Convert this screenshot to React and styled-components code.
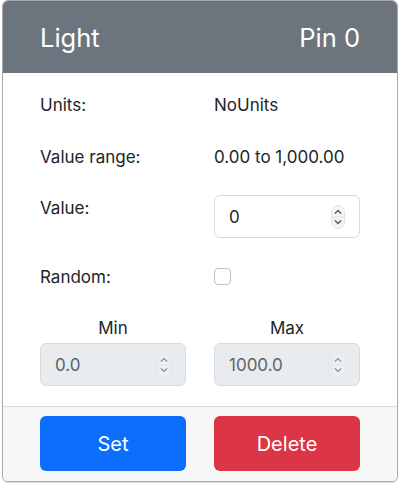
import React from 'react'
import styled, { createGlobalStyle } from 'styled-components'

const GlobalStyle = createGlobalStyle`
body {
  margin: 0;
  background: #fff;
  font-family: Inter, 'Liberation Sans', sans-serif;
  color: #212529;
}
`

const Page = styled.div`
padding: 0 2px 2px 2px;
`

const Card = styled.div`
border: 1px solid #a9a9a9;
border-radius: 6px;
overflow: hidden;
box-shadow: 0 1px 1px rgba(0,0,0,0.15);
`

const Header = styled.div`
height: 72px;
background: #6c757d;
color: #fff;
display: flex;
align-items: center;
justify-content: space-between;
padding: 0 37px;
font-size: 25.5px;
`

const Body = styled.div`
padding: 19px 37px 20px 37px;
display: flex;
flex-direction: column;
gap: 25.5px;
font-size: 17px;
line-height: 26px;
`

const Row = styled.div`
display: grid;
grid-template-columns: minmax(0, 1fr) minmax(0, 1fr);
column-gap: 28px;
align-items: start;
`

const Label = styled.div`
text-align: ${props => props.center ? 'center' : 'left'};
`

const Stack = styled.div`
display: flex;
flex-direction: column;
gap: 2px;
`

const InputBox = styled.div`
height: 43px;
box-sizing: border-box;
border: 1px solid #d7dbe0;
border-radius: 6px;
background: ${props => props.disabled ? '#e9ecef' : '#fff'};
display: flex;
align-items: center;
padding: 0 14px 0 14px;
`

const NumInput = styled.input`
flex: 1;
width: 0;
min-width: 0;
border: none;
outline: none;
background: transparent;
font: inherit;
font-size: 17px;
color: ${props => props.disabled ? '#5c636a' : '#212529'};
padding: 0;
appearance: textfield;
&::-webkit-inner-spin-button,
&::-webkit-outer-spin-button {
  -webkit-appearance: none;
  margin: 0;
}
`

const Check = styled.div`
width: 17px;
height: 17px;
box-sizing: border-box;
border: 1px solid #b9bec4;
border-radius: 4px;
margin-top: 4px;
background: #fff;
`

const Footer = styled.div`
border-top: 1px solid #dcdcdc;
background: #f7f7f7;
padding: 9px 37px 10px 37px;
display: grid;
grid-template-columns: minmax(0, 1fr) minmax(0, 1fr);
column-gap: 28px;
`

const Button = styled.button`
height: 55px;
border: none;
border-radius: 6px;
background: ${props => props.variant === 'danger' ? '#dc3545' : '#0d6efd'};
color: #fff;
font-family: inherit;
font-size: 20px;
cursor: pointer;
`

const Spinner = ({ faded }) => (
  <svg width="14" height="24" viewBox="0 0 14 24" style={{ opacity: faded ? 0.55 : 1 }}>
    <rect x="0.5" y="0.5" width="13" height="23" rx="6.5" fill="#f5f5f5" stroke="#e4e4e4" />
    <line x1="1" y1="12" x2="13" y2="12" stroke="#dcdcdc" />
    <path d="M4.2 8.3 L7 5.5 L9.8 8.3" fill="none" stroke="#555" strokeWidth="1.3" strokeLinecap="round" strokeLinejoin="round" />
    <path d="M4.2 15.7 L7 18.5 L9.8 15.7" fill="none" stroke="#555" strokeWidth="1.3" strokeLinecap="round" strokeLinejoin="round" />
  </svg>
)

const NumberField = ({ value, disabled }) => (
  <InputBox disabled={disabled}>
    <NumInput type="number" defaultValue={value} disabled={disabled} />
    <Spinner faded={disabled} />
  </InputBox>
)

export default function App() {
  return (
    <Page>
      <GlobalStyle />
      <Card>
        <Header>
          <span>Light</span>
          <span>Pin 0</span>
        </Header>
        <Body>
          <Row>
            <Label>Units:</Label>
            <Label>NoUnits</Label>
          </Row>
          <Row>
            <Label>Value range:</Label>
            <Label>0.00 to 1,000.00</Label>
          </Row>
          <Row>
            <Label>Value:</Label>
            <NumberField value="0" />
          </Row>
          <Row>
            <Label>Random:</Label>
            <Check />
          </Row>
          <Row>
            <Stack>
              <Label center>Min</Label>
              <NumberField value="0.0" disabled />
            </Stack>
            <Stack>
              <Label center>Max</Label>
              <NumberField value="1000.0" disabled />
            </Stack>
          </Row>
        </Body>
        <Footer>
          <Button>Set</Button>
          <Button variant="danger">Delete</Button>
        </Footer>
      </Card>
    </Page>
  )
}
